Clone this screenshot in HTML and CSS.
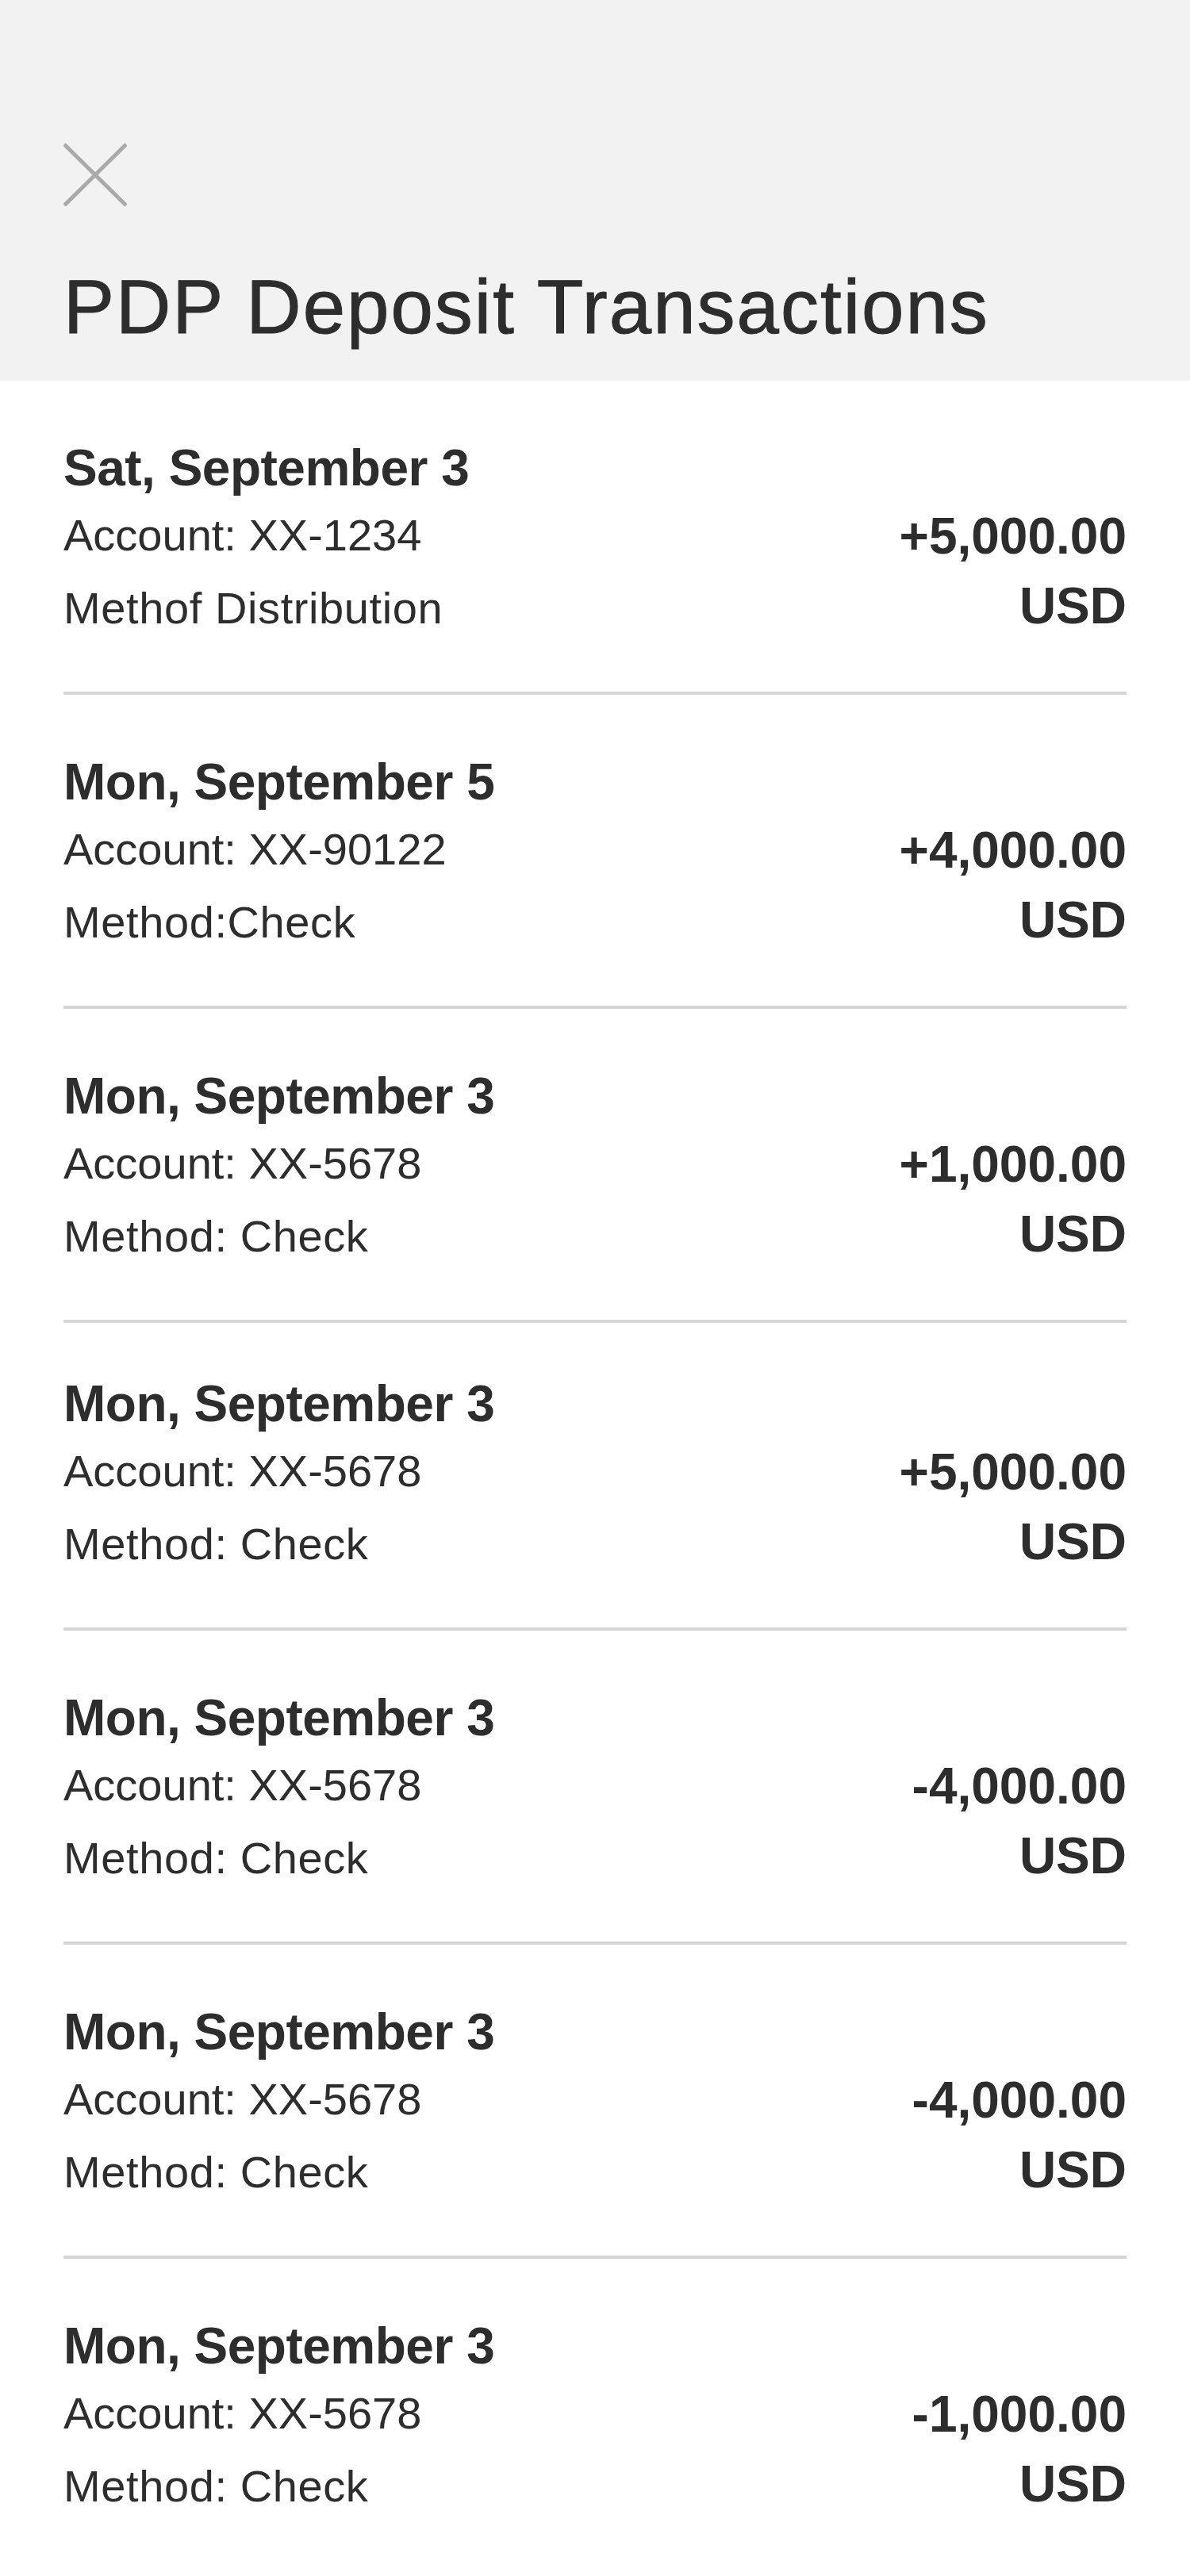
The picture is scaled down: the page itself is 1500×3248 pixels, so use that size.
FILE: index.html
```html
<!DOCTYPE html>
<html lang="en">
<head>
<meta charset="utf-8">
<title>PDP Deposit Transactions</title>
<link rel="stylesheet" href="styles.css">
</head>
<body>
<header class="sheet-header">
  <button class="close-btn" aria-label="Close">
    <svg class="close-icon" viewBox="0 0 80 80" width="80" height="80">
      <line x1="1" y1="2" x2="79" y2="79" />
      <line x1="79" y1="2" x2="1" y2="79" />
    </svg>
  </button>
  <h1 class="title">PDP Deposit Transactions</h1>
</header>
<main class="list">
  <section class="txn">
    <div class="date">Sat, September 3</div>
    <div class="row">
      <div class="left"><div class="account">Account: XX-1234</div><div class="method">Methof Distribution</div></div>
      <div class="right"><div class="amount">+5,000.00</div><div class="currency">USD</div></div>
    </div>
  </section>
  <section class="txn">
    <div class="date">Mon, September 5</div>
    <div class="row">
      <div class="left"><div class="account">Account: XX-90122</div><div class="method">Method:Check</div></div>
      <div class="right"><div class="amount">+4,000.00</div><div class="currency">USD</div></div>
    </div>
  </section>
  <section class="txn">
    <div class="date">Mon, September 3</div>
    <div class="row">
      <div class="left"><div class="account">Account: XX-5678</div><div class="method">Method: Check</div></div>
      <div class="right"><div class="amount">+1,000.00</div><div class="currency">USD</div></div>
    </div>
  </section>
  <section class="txn txn-compact">
    <div class="date">Mon, September 3</div>
    <div class="row">
      <div class="left"><div class="account">Account: XX-5678</div><div class="method">Method: Check</div></div>
      <div class="right"><div class="amount">+5,000.00</div><div class="currency">USD</div></div>
    </div>
  </section>
  <section class="txn">
    <div class="date">Mon, September 3</div>
    <div class="row">
      <div class="left"><div class="account">Account: XX-5678</div><div class="method">Method: Check</div></div>
      <div class="right"><div class="amount">-4,000.00</div><div class="currency">USD</div></div>
    </div>
  </section>
  <section class="txn">
    <div class="date">Mon, September 3</div>
    <div class="row">
      <div class="left"><div class="account">Account: XX-5678</div><div class="method">Method: Check</div></div>
      <div class="right"><div class="amount">-4,000.00</div><div class="currency">USD</div></div>
    </div>
  </section>
  <section class="txn">
    <div class="date">Mon, September 3</div>
    <div class="row">
      <div class="left"><div class="account">Account: XX-5678</div><div class="method">Method: Check</div></div>
      <div class="right"><div class="amount">-1,000.00</div><div class="currency">USD</div></div>
    </div>
  </section>
</main>
</body>
</html>
```
FILE: styles.css
```css
* { box-sizing: border-box; }
html, body {
  margin: 0;
  padding: 0;
  background: #ffffff;
}
body {
  font-family: "Liberation Sans", Arial, Helvetica, sans-serif;
  color: #2d2d2d;
}
.sheet-header {
  background: #f2f2f2;
  height: 480px;
  padding: 180px 80px 0 80px;
}
.close-btn {
  display: block;
  width: 80px;
  height: 80px;
  padding: 0;
  margin: 0;
  border: 0;
  background: transparent;
}
.close-icon {
  display: block;
}
.close-icon line {
  stroke: #aaaaaa;
  stroke-width: 5;
  stroke-linecap: butt;
}
.title {
  margin: 72px 0 0 0;
  font-size: 96px;
  line-height: 110px;
  font-weight: 400;
  letter-spacing: 2px;
  color: #2d2d2d;
  -webkit-text-stroke: 1px #2d2d2d;
}
.list {
  padding: 0 80px;
}
.txn {
  padding: 70px 0 58px 0;
  border-bottom: 4px solid #d5d5d5;
}
.txn-compact {
  padding-top: 62px;
}
.txn:last-child {
  border-bottom: 0;
}
.date {
  font-size: 64px;
  line-height: 80px;
  font-weight: 700;
  letter-spacing: -0.5px;
}
.row {
  display: flex;
  justify-content: space-between;
  align-items: flex-start;
}
.account {
  font-size: 56px;
  line-height: 90px;
}
.method {
  font-size: 56px;
  line-height: 94px;
  letter-spacing: 0.6px;
}
.right {
  text-align: right;
}
.amount {
  font-size: 64px;
  line-height: 92px;
  font-weight: 700;
}
.currency {
  font-size: 64px;
  line-height: 85px;
  font-weight: 700;
}
```
